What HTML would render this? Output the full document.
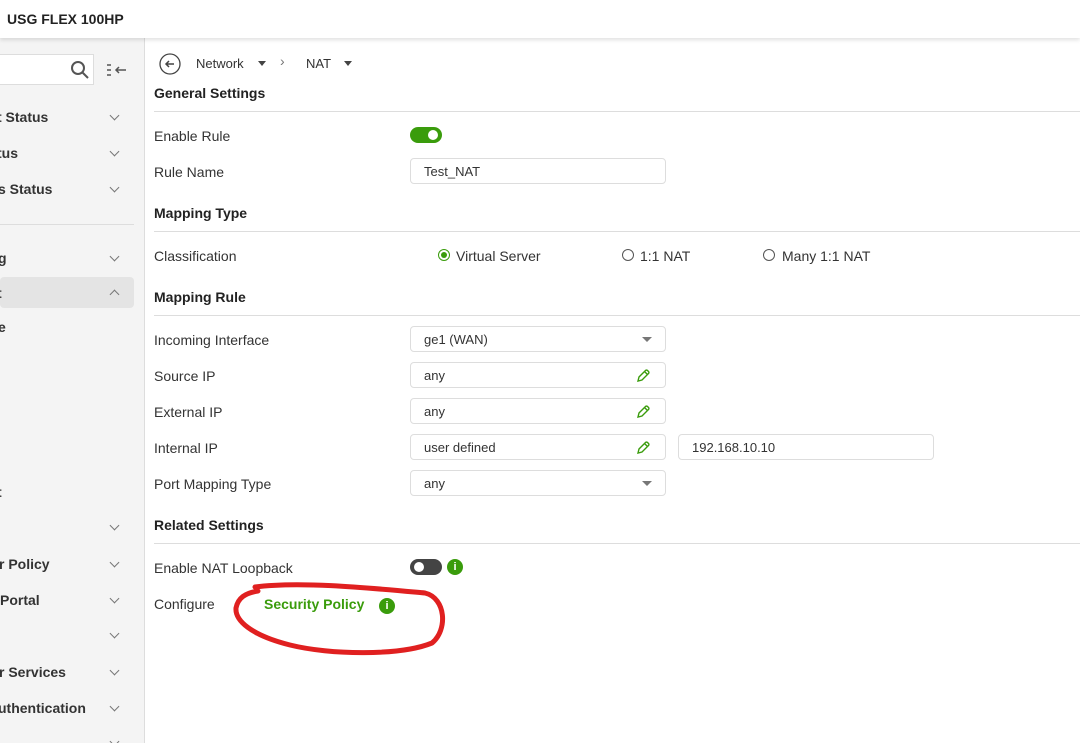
<!DOCTYPE html>
<html><head><meta charset="utf-8"><style>
*{margin:0;padding:0;box-sizing:border-box}
body{width:1080px;height:743px;overflow:hidden;background:#fff;font-family:"Liberation Sans",sans-serif;color:#333;position:relative}
.hdr{position:absolute;left:0;top:0;width:1080px;height:38px;background:#fff;box-shadow:0 2px 4px rgba(0,0,0,.12);z-index:3}
.hdr span{position:absolute;left:7px;top:11px;font-weight:bold;font-size:14px;color:#222}
.side{position:absolute;left:0;top:38px;width:145px;height:705px;background:#f4f4f4;border-right:1px solid #ddd;overflow:hidden}
.s{position:absolute;font-weight:bold;font-size:14px;color:#333;white-space:nowrap}
.chev{position:absolute;left:111px;width:7px;height:7px;border-right:1.5px solid #777;border-bottom:1.5px solid #777;transform:rotate(45deg)}
.up{transform:rotate(-135deg)}
.t{position:absolute;font-size:14px;color:#333;white-space:nowrap}
.h{position:absolute;left:154px;font-weight:bold;font-size:14px;color:#222}
.ln{position:absolute;left:154px;width:926px;height:1px;background:#ddd}
.in{position:absolute;left:410px;width:256px;height:26px;border:1px solid #ddd;border-radius:4px;font-size:13px;padding:5px 13px;color:#333}
.dd:after{content:"";position:absolute;right:13px;top:10px;border:5px solid transparent;border-top:5px solid #777;border-bottom:0}
.pen{position:absolute;right:14px;top:5px}
.rad{position:absolute;width:12px;height:12px;border:1.5px solid #555;border-radius:50%}
.info{position:absolute;width:16px;height:16px;border-radius:50%;background:#3a9c0c;color:#fff;font-size:11px;font-weight:bold;text-align:center;line-height:16px}
</style></head><body>
<div class="hdr"><span>USG FLEX 100HP</span></div>
<div class="side">
<div style="position:absolute;left:-2px;top:16px;width:96px;height:31px;background:#fff;border:1px solid #ddd"></div>
<svg style="position:absolute;left:70px;top:22px" width="20" height="20"><circle cx="8" cy="8" r="6" fill="none" stroke="#555" stroke-width="2"/><path d="M12.5 12.5L18 18" stroke="#555" stroke-width="2"/></svg>
<svg style="position:absolute;left:106px;top:25px" width="22" height="14"><path d="M1 2h4M1 7h4M1 12h4" stroke="#555" stroke-width="1.5"/><path d="M20 7H10M13 4l-3 3 3 3" stroke="#555" stroke-width="1.5" fill="none"/></svg>
<div class="s" style="left:-3px;top:71px">t Status</div><div class="chev" style="top:74px"></div>
<div class="s" style="left:-3px;top:107px">tus</div><div class="chev" style="top:110px"></div>
<div class="s" style="left:-2px;top:143px">s Status</div><div class="chev" style="top:146px"></div>
<div style="position:absolute;left:0;top:186px;width:134px;height:1px;background:#ddd"></div>
<div class="s" style="left:-2px;top:212px">g</div><div class="chev" style="top:215px"></div>
<div style="position:absolute;left:0;top:239px;width:134px;height:31px;background:#e4e4e4;border-radius:4px"></div>
<div class="s" style="left:-3px;top:247px">t</div><div class="chev up" style="top:253px"></div>
<div class="s" style="left:-2px;top:281px">e</div>
<div class="s" style="left:-3px;top:446px">t</div>
<div class="chev" style="top:484px"></div>
<div class="s" style="left:-1px;top:518px">r Policy</div><div class="chev" style="top:521px"></div>
<div class="s" style="left:0;top:554px">Portal</div><div class="chev" style="top:557px"></div>
<div class="chev" style="top:592px"></div>
<div class="s" style="left:-1px;top:626px">r Services</div><div class="chev" style="top:629px"></div>
<div class="s" style="left:-2px;top:662px">uthentication</div><div class="chev" style="top:665px"></div>
<div class="chev" style="top:700px"></div>
</div>
<svg style="position:absolute;left:159px;top:53px" width="22" height="22"><circle cx="11" cy="11" r="10" fill="none" stroke="#444" stroke-width="1.3"/><path d="M15 11H7M10 8l-3 3 3 3" stroke="#444" stroke-width="1.5" fill="none"/></svg>
<div class="t" style="left:196px;top:56px;font-size:13px">Network</div>
<div style="position:absolute;left:258px;top:61px;border:4px solid transparent;border-top:5px solid #444"></div>
<div class="t" style="left:280px;top:53px;font-size:14px;color:#777">›</div>
<div class="t" style="left:306px;top:56px;font-size:13px">NAT</div>
<div style="position:absolute;left:344px;top:61px;border:4px solid transparent;border-top:5px solid #444"></div>
<div class="h" style="top:85px">General Settings</div><div class="ln" style="top:111px"></div>
<div class="t" style="left:154px;top:128px">Enable Rule</div>
<div style="position:absolute;left:410px;top:127px;width:32px;height:16px;border-radius:8px;background:#3a9c0c"></div>
<div style="position:absolute;left:428px;top:130px;width:10px;height:10px;border-radius:50%;background:#fff"></div>
<div class="t" style="left:154px;top:164px">Rule Name</div>
<div class="in" style="top:158px">Test_NAT</div>
<div class="h" style="top:205px">Mapping Type</div><div class="ln" style="top:231px"></div>
<div class="t" style="left:154px;top:248px">Classification</div>
<div class="rad" style="left:438px;top:249px;border-color:#3a9c0c"></div><div style="position:absolute;left:441px;top:252px;width:6px;height:6px;border-radius:50%;background:#3a9c0c"></div>
<div class="t" style="left:456px;top:248px">Virtual Server</div>
<div class="rad" style="left:622px;top:249px"></div><div class="t" style="left:640px;top:248px">1:1 NAT</div>
<div class="rad" style="left:763px;top:249px"></div><div class="t" style="left:782px;top:248px">Many 1:1 NAT</div>
<div class="h" style="top:289px">Mapping Rule</div><div class="ln" style="top:315px"></div>
<div class="t" style="left:154px;top:332px">Incoming Interface</div>
<div class="in dd" style="top:326px">ge1 (WAN)</div>
<div class="t" style="left:154px;top:368px">Source IP</div>
<div class="in" style="top:362px">any<svg class="pen" width="15" height="15"><path d="M2 13l1-4 6.5-6.5a1.4 1.4 0 0 1 2 0l1 1a1.4 1.4 0 0 1 0 2L6 12z M8.5 3.5l3 3" stroke="#3a9c0c" stroke-width="1.4" fill="none"/></svg></div>
<div class="t" style="left:154px;top:404px">External IP</div>
<div class="in" style="top:398px">any<svg class="pen" width="15" height="15"><path d="M2 13l1-4 6.5-6.5a1.4 1.4 0 0 1 2 0l1 1a1.4 1.4 0 0 1 0 2L6 12z M8.5 3.5l3 3" stroke="#3a9c0c" stroke-width="1.4" fill="none"/></svg></div>
<div class="t" style="left:154px;top:440px">Internal IP</div>
<div class="in" style="top:434px">user defined<svg class="pen" width="15" height="15"><path d="M2 13l1-4 6.5-6.5a1.4 1.4 0 0 1 2 0l1 1a1.4 1.4 0 0 1 0 2L6 12z M8.5 3.5l3 3" stroke="#3a9c0c" stroke-width="1.4" fill="none"/></svg></div>
<div class="in" style="top:434px;left:678px">192.168.10.10</div>
<div class="t" style="left:154px;top:476px">Port Mapping Type</div>
<div class="in dd" style="top:470px">any</div>
<div class="h" style="top:517px">Related Settings</div><div class="ln" style="top:543px"></div>
<div class="t" style="left:154px;top:560px">Enable NAT Loopback</div>
<div style="position:absolute;left:410px;top:559px;width:32px;height:16px;border-radius:8px;background:#444"></div>
<div style="position:absolute;left:414px;top:562px;width:10px;height:10px;border-radius:50%;background:#fff"></div>
<div class="info" style="left:447px;top:559px">i</div>
<div class="t" style="left:154px;top:596px">Configure</div>
<div class="t" style="left:264px;top:596px;color:#3a9c0c;font-weight:bold">Security Policy</div>
<div class="info" style="left:379px;top:598px">i</div>
<svg style="position:absolute;left:0;top:0" width="1080" height="743"><path d="M255 587C300 581 370 588 425 593C446 598 448 630 432 643C400 656 330 655 290 645C250 635 235 620 236 608C238 598 245 593 258 591" fill="none" stroke="#e02020" stroke-width="5" stroke-linecap="round"/></svg>
</body></html>
